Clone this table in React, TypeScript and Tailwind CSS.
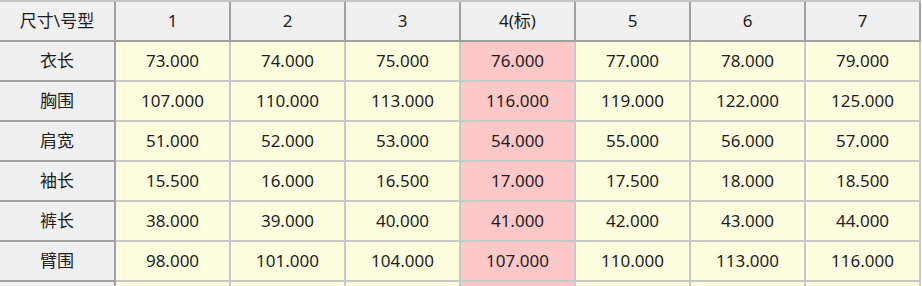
import React from "react";

const headers = ["1", "2", "3", "4(标)", "5", "6", "7"];
const rows: [string, string[]][] = [
  ["衣长", ["73.000", "74.000", "75.000", "76.000", "77.000", "78.000", "79.000"]],
  ["胸围", ["107.000", "110.000", "113.000", "116.000", "119.000", "122.000", "125.000"]],
  ["肩宽", ["51.000", "52.000", "53.000", "54.000", "55.000", "56.000", "57.000"]],
  ["袖长", ["15.500", "16.000", "16.500", "17.000", "17.500", "18.000", "18.500"]],
  ["裤长", ["38.000", "39.000", "40.000", "41.000", "42.000", "43.000", "44.000"]],
  ["臂围", ["98.000", "101.000", "104.000", "107.000", "110.000", "113.000", "116.000"]],
  ["", ["", "", "", "", "", "", ""]],
];

export default function App() {
  return (
    <div
      className="w-[922px] h-[286px] overflow-hidden bg-white text-[17px] text-[#1e1e1e]"
      style={{ fontFamily: '"Noto Sans", "Noto Sans CJK SC", sans-serif' }}
    >
      <div className="border-t-2 border-[#c4c4c4] grid grid-cols-[116px_repeat(7,115px)] w-[921px]">
        <div className="h-[40px] flex items-center justify-center bg-[#f0f0f0] border-r-2 border-b-2 border-[#a0a0a0]">
          尺寸\号型
        </div>
        {headers.map((h) => (
          <div
            key={h}
            className="h-[40px] flex items-center justify-center bg-[#f0f0f0] border-r-2 border-b-2 border-[#a0a0a0]"
          >
            {h}
          </div>
        ))}
        {rows.map(([label, vals], ri) => (
          <React.Fragment key={ri}>
            <div className="h-[40px] flex items-center justify-center bg-[#f0f0f0] border-r-2 border-b-2 border-[#a0a0a0]">
              {label}
            </div>
            {vals.map((v, ci) => (
              <div
                key={ci}
                className={
                  ci === 3
                    ? "h-[40px] flex items-center justify-center bg-[#ffc8c8] border-r-2 border-b-2 border-[#c8c8c8]"
                    : "h-[40px] flex items-center justify-center bg-[#ffffe0] border-r-2 border-b-2 border-[#c8c8c8]"
                }
              >
                {v}
              </div>
            ))}
          </React.Fragment>
        ))}
      </div>
    </div>
  );
}
